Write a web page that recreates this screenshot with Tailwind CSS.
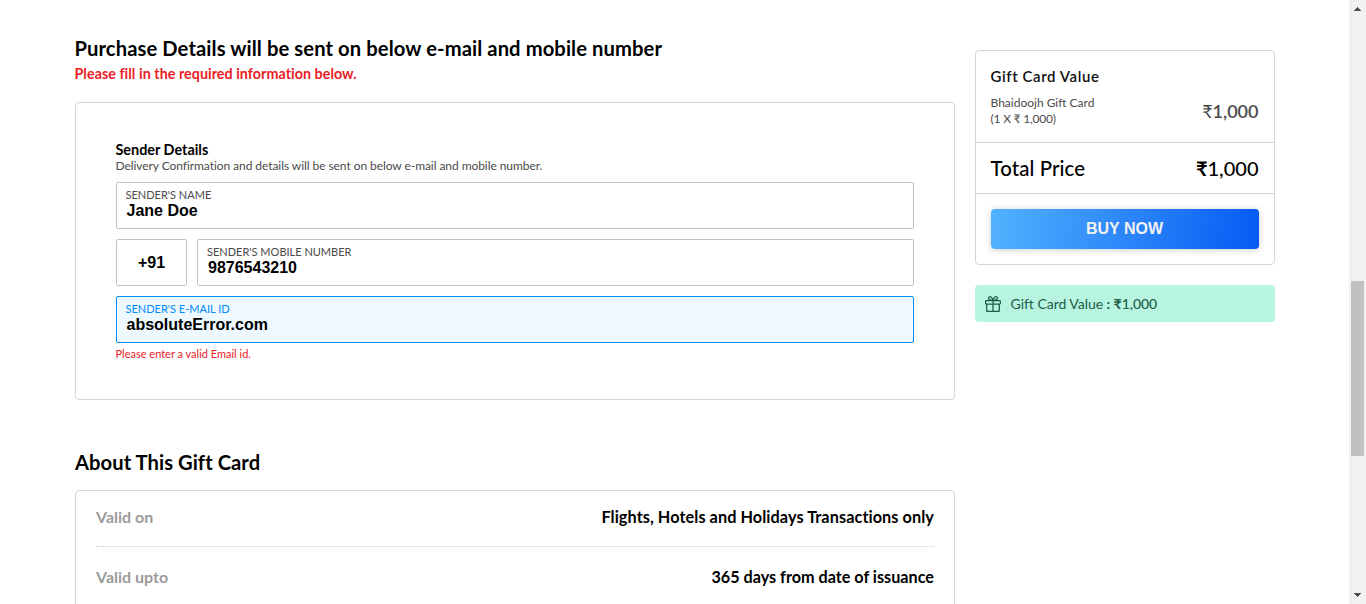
<!DOCTYPE html>
<html lang="en">
<head>
<meta charset="utf-8">
<title>Gift Card</title>
<script src="https://cdn.jsdelivr.net/npm/@tailwindcss/browser@4"></script>
</head>
<body class="flex h-[604px] overflow-hidden bg-white font-['Lato','Noto_Sans',sans-serif] text-black">
<main class="flex h-full w-[1349px] shrink-0 items-start gap-5 overflow-hidden pl-[75px]">
  <div class="w-[880px] shrink-0 pt-9">
    <h1 class="-ml-[0.5px] flex h-6 items-center whitespace-nowrap text-[20.2px] leading-6 font-bold tracking-[0.09px]"><span>Purchase Details will be sent on below e-mail and mobile number</span></h1>
    <p class="mt-1 -ml-[0.5px] flex h-5 items-center pb-px text-[14.3px] leading-[19px] font-bold tracking-[0.04px] text-[#eb2026]"><span>Please fill in the required information below.</span></p>
    <section class="mt-[18px] h-[298px] rounded border border-[#d5d5d5] px-10 pt-[38px]">
      <h2 class="-ml-[0.5px] text-[14.4px] leading-[17px] font-bold"><span>Sender Details</span></h2>
      <p class="-ml-[0.5px] text-[12px] leading-4 tracking-[-0.065px] text-[#4a4a4a]"><span>Delivery Confirmation and details will be sent on below e-mail and mobile number.</span></p>
      <div class="mt-2 flex flex-col gap-2.5">
        <label class="block h-[47px] rounded-xs border border-[#c2c2c2] px-[8.5px] pt-[5px]">
          <span class="block text-[11px] leading-[13px] text-[#4a4a4a]">SENDER'S NAME</span>
          <span class="mt-px block pl-px font-['Liberation_Sans',sans-serif] text-[16px] leading-[18px] font-bold">Jane Doe</span>
        </label>
        <div class="flex gap-2.5">
          <div class="flex h-[47px] w-[71px] items-center justify-center rounded-xs border border-[#c2c2c2] font-['Liberation_Sans',sans-serif] text-[16px] font-bold">+91</div>
          <label class="block h-[47px] flex-1 rounded-xs border border-[#c2c2c2] px-[9px] pt-[5px]">
            <span class="block text-[11px] leading-[13px] text-[#4a4a4a]">SENDER'S MOBILE NUMBER</span>
            <span class="mt-px block pl-px font-['Liberation_Sans',sans-serif] text-[16px] leading-[18px] font-bold">9876543210</span>
          </label>
        </div>
        <label class="block h-[47px] rounded-xs border border-[#008cff] bg-[#eef9ff] px-[8.5px] pt-[5px]">
          <span class="block text-[11px] leading-[13px] text-[#008cff]">SENDER'S E-MAIL ID</span>
          <span class="mt-px block pl-px font-['Liberation_Sans',sans-serif] text-[16px] leading-[18px] font-bold">absoluteError.com</span>
        </label>
      </div>
      <p class="mt-1 -ml-[0.5px] text-[11px] leading-[14px] text-[#eb2026]"><span>Please enter a valid Email id.</span></p>
    </section>
    <h2 class="mt-[50px] text-[20.2px] leading-6 font-bold tracking-[0.05px]"><span>About This Gift Card</span></h2>
    <section class="mt-4 h-[200px] rounded border border-[#d5d5d5] px-5">
      <div class="flex h-14 items-center justify-between border-b border-dotted border-[#cbcbcb] pb-[3px] text-[16px] font-bold">
        <span class="text-[#9b9b9b]">Valid on</span><span class="text-[16.3px] tracking-[0.06px]">Flights, Hotels and Holidays Transactions only</span>
      </div>
      <div class="flex h-[60px] items-center justify-between text-[16px] font-bold">
        <span class="text-[#9b9b9b]">Valid upto</span><span class="text-[16.2px]">365 days from date of issuance</span>
      </div>
    </section>
  </div>
  <aside class="w-[300px] shrink-0 pt-[50px]">
    <section class="h-[215px] rounded border border-[#d5d5d5]">
      <div class="h-[92px] border-b border-[#d5d5d5] pr-[15.5px] pl-[14.5px] pt-4">
        <h3 class="text-[15px] leading-[18px] font-semibold tracking-[0.58px] text-[#111]"><span>Gift Card Value</span></h3>
        <div class="mt-2.5 flex justify-between text-[#4a4a4a]">
          <p class="text-[12px] leading-4"><span>Bhaidoojh Gift Card</span><br><span class="tracking-[-0.2px]">(1 X ₹ 1,000)</span></p>
          <p class="text-[18px] leading-8 font-medium"><span class="font-normal">₹</span><span class="font-semibold">1,000</span></p>
        </div>
      </div>
      <div class="flex h-[51px] items-center justify-between border-b border-[#d5d5d5] pr-[15.5px] pl-[14.5px] pt-px text-[20.4px] font-medium"><span class="tracking-[0.1px]">Total Price</span><span class="pb-0.5 text-[20px]"><b>₹</b>1,000</span></div>
      <div class="px-[15px] pt-[15px]">
        <button class="flex h-10 w-full items-center justify-center rounded bg-linear-[96deg,#53b2fe,#065af3] pr-px font-['Liberation_Sans',sans-serif] text-[16px] font-bold text-[#f2f2f2] shadow-[0_1px_7px_0_rgba(0,0,0,0.2)]">BUY NOW</button>
      </div>
    </section>
    <div class="mt-5 flex h-[37px] items-center rounded bg-[#b8f5e0] pl-[10px] text-[14px] text-[#1e5c46]">
      <svg class="h-4 w-4 shrink-0" viewBox="0 0 16 16" fill="none" stroke="currentColor" stroke-width="1.25"><rect x=".6" y="4.5" width="14.8" height="3.5" rx=".8"/><path d="M1.7 8v6.7q0 .7.7.7h11.2q.7 0 .7-.7V8M8 4.5v10.9M8 4.4C6.9.6 4.5-.1 3.7 1.5 3 3 4.6 4.1 8 4.4ZM8 4.4C9.1.6 11.5-.1 12.3 1.5 13 3 11.4 4.1 8 4.4Z"/></svg>
      <span class="ml-[9.5px] tracking-[-0.03px]">Gift Card Value <b>: ₹</b><span class="font-medium">1,000</span></span>
    </div>
  </aside>
</main>
<div class="flex h-full w-[17px] shrink-0 flex-col items-center bg-[#f1f1f1]">
  <svg class="h-[17px] w-[17px]" viewBox="0 0 17 17" fill="#505050" shape-rendering="crispEdges"><path d="M5 11V10H6V9H7V8H8V7H9V8H10V9H11V10H12V11Z"/></svg>
  <div class="mt-[264px] h-[175px] w-[13px] bg-[#c1c1c1]"></div>
  <svg class="mt-auto h-[17px] w-[17px]" viewBox="0 0 17 17" fill="#505050" shape-rendering="crispEdges"><path d="M5 6V7H6V8H7V9H8V10H9V9H10V8H11V7H12V6Z"/></svg>
</div>
</body>
</html>
